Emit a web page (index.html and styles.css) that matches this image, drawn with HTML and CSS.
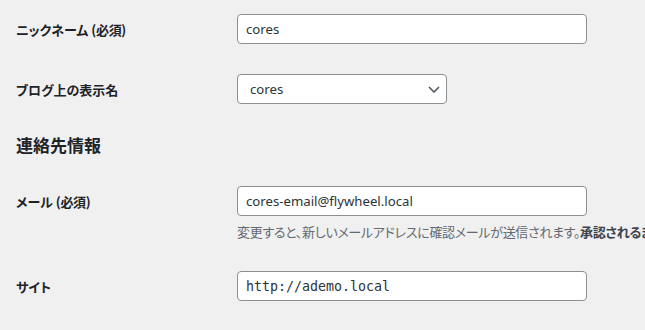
FILE: index.html
```html
<!DOCTYPE html>
<html lang="ja">
<head>
  <meta charset="UTF-8">
  <title>プロフィール</title>
  <link rel="stylesheet" href="styles.css">
</head>
<body>

<div class="wrap">
  <div class="form-row">
    <label class="field-label" for="nickname">ニックネーム <span class="req">(必須)</span></label>
    <div class="field">
      <input type="text" id="nickname" class="regular-text" value="cores">
    </div>
  </div>

  <div class="form-row">
    <label class="field-label" for="display_name">ブログ上の表示名</label>
    <div class="field">
      <div class="select-box">
        <select id="display_name">
          <option selected>cores</option>
        </select>
        <svg class="chevron" width="12" height="7" viewBox="0 0 12 7">
          <path d="M1 1l5 5 5-5" fill="none" stroke="#50575e" stroke-width="1.6"/>
        </svg>
      </div>
    </div>
  </div>

  <h2 class="section-title">連絡先情報</h2>

  <div class="form-row">
    <label class="field-label" for="email">メール <span class="req">(必須)</span></label>
    <div class="field">
      <input type="email" id="email" class="regular-text" value="cores-email@flywheel.local">
      <p class="description">変更すると、新しいメールアドレスに確認メールが送信されます。<strong>承認されるまで新しいアドレスは有効になりません。</strong></p>
    </div>
  </div>

  <div class="form-row">
    <label class="field-label" for="url">サイト</label>
    <div class="field">
      <input type="url" id="url" class="regular-text code" value="http://ademo.local">
    </div>
  </div>
</div>

</body>
</html>
```

FILE: styles.css
```css
html, body {
  margin: 0;
  padding: 0;
  overflow: hidden;
}

body {
  background-color: #f0f0f1;
  color: #1d2327;
  font-family: "Noto Sans", "Noto Sans CJK JP", sans-serif;
  font-size: 13px;
}

.wrap {
  padding: 0 0 0 16px;
  margin-top: -1px;
}

.form-row {
  display: grid;
  grid-template-columns: 221px 1fr;
}

.field-label {
  padding: 22px 10px 20px 0;
  font-family: "Noto Sans CJK JP", sans-serif;
  font-feature-settings: "palt";
  font-weight: bold;
  font-size: 13px;
  line-height: 18px;
  color: #1d2327;
}

.field-label .req {
  letter-spacing: -0.3px;
}

.field {
  padding: 15px 0;
  min-width: 0;
}

.regular-text {
  box-sizing: border-box;
  width: 350px;
  height: 30px;
  margin: 0;
  padding: 0 8px;
  border: 1px solid #8c8f94;
  border-radius: 4px;
  background: #fff;
  color: #2c3338;
  font-family: "Noto Sans", "Open Sans", sans-serif;
  font-size: 13.2px;
  outline: none;
}

.regular-text.code {
  font-family: "DejaVu Sans Mono", monospace;
  font-size: 13.3px;
}

.select-box {
  position: relative;
  width: 210px;
  height: 30px;
}

.select-box select {
  box-sizing: border-box;
  width: 210px;
  height: 30px;
  margin: 0;
  padding: 0 24px 0 12px;
  border: 1px solid #8c8f94;
  border-radius: 4px;
  background: #fff;
  color: #2c3338;
  font-family: "Noto Sans", "Open Sans", sans-serif;
  font-size: 13.2px;
  appearance: none;
  -webkit-appearance: none;
}

.chevron {
  position: absolute;
  right: 7px;
  top: 12px;
  pointer-events: none;
}

.section-title {
  margin: 14px 0;
  font-family: "Noto Sans CJK JP", sans-serif;
  font-size: 17px;
  line-height: 24px;
  font-weight: bold;
  color: #1d2327;
}

.description {
  margin: 7px 0 0;
  font-family: "Noto Sans CJK JP", sans-serif;
  font-feature-settings: "palt";
  font-size: 13px;
  line-height: 18px;
  letter-spacing: -0.3px;
  color: #646970;
  white-space: nowrap;
}

.description strong {
  color: #3c434a;
}
```
